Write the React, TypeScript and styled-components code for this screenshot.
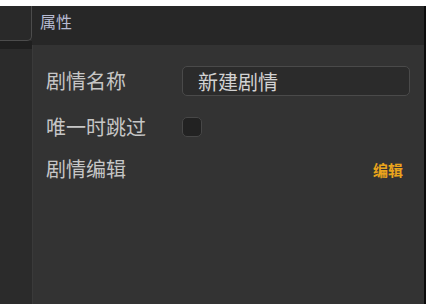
import styled, { createGlobalStyle } from 'styled-components';

const GlobalStyle = createGlobalStyle`
  html, body {
    margin: 0;
    padding: 0;
    background: #ffffff;
  }
  body {
    font-family: "Noto Sans CJK SC", "Noto Sans", sans-serif;
  }
`;

const Page = styled.div`
  padding-top: 6px;
  height: 304px;
  box-sizing: border-box;
  background: #ffffff;
`;

const Frame = styled.div`
  display: flex;
  height: 298px;
  background: #0c0c0c;
  padding-right: 2px;
  box-sizing: border-box;
`;

const Sidebar = styled.div`
  width: 32px;
  display: flex;
  flex-direction: column;
  background: #2a2a2a;
`;

const SideTab = styled.div`
  height: 35px;
  background: #292929;
  border-right: 1px solid #4c4c4c;
  border-bottom: 1px solid #4c4c4c;
  border-bottom-right-radius: 5px;
  box-sizing: border-box;
`;

const SideDivider = styled.div`
  height: 8px;
  background: #1f1f1f;
`;

const SideBody = styled.div`
  flex: 1;
  background: #2b2b2b;
`;

const Main = styled.div`
  flex: 1;
  display: flex;
  flex-direction: column;
`;

const Header = styled.div`
  height: 39px;
  box-sizing: border-box;
  padding: 5px 0 0 8px;
  background: #272727;
  color: #b6bad2;
  font-size: 16px;
  line-height: 20px;
`;

const Panel = styled.div`
  flex: 1;
  display: flex;
  flex-direction: column;
  gap: 21px;
  padding: 21px 14px 0 13px;
  background: #333333;
  border-left: 1px solid #3a3a3a;
`;

const Row = styled.div<{ $h: number }>`
  display: flex;
  align-items: center;
  height: ${(p) => p.$h}px;
`;

const Label = styled.div`
  width: 136px;
  flex-shrink: 0;
  color: #c6c6c6;
  font-size: 20px;
  line-height: 22px;
`;

const TextInput = styled.div`
  flex: 1;
  height: 30px;
  box-sizing: border-box;
  padding-left: 15px;
  display: flex;
  align-items: center;
  background: #2b2b2b;
  border: 1px solid #4a4a4a;
  border-radius: 5px;
  color: #d2d2d2;
  font-size: 20px;
`;

const Check = styled.div`
  width: 20px;
  height: 20px;
  box-sizing: border-box;
  background: #222222;
  border: 1px solid #474747;
  border-radius: 5px;
`;

const Action = styled.div`
  flex: 1;
  text-align: right;
  padding-right: 7px;
  color: #eaa41c;
  font-size: 15px;
  font-weight: bold;
`;

export default function App() {
  return (
    <>
      <GlobalStyle />
      <Page>
        <Frame>
          <Sidebar>
            <SideTab />
            <SideDivider />
            <SideBody />
          </Sidebar>
          <Main>
            <Header>属性</Header>
            <Panel>
              <Row $h={30}>
                <Label>剧情名称</Label>
                <TextInput>新建剧情</TextInput>
              </Row>
              <Row $h={20}>
                <Label>唯一时跳过</Label>
                <Check />
              </Row>
              <Row $h={22}>
                <Label>剧情编辑</Label>
                <Action>编辑</Action>
              </Row>
            </Panel>
          </Main>
        </Frame>
      </Page>
    </>
  );
}
